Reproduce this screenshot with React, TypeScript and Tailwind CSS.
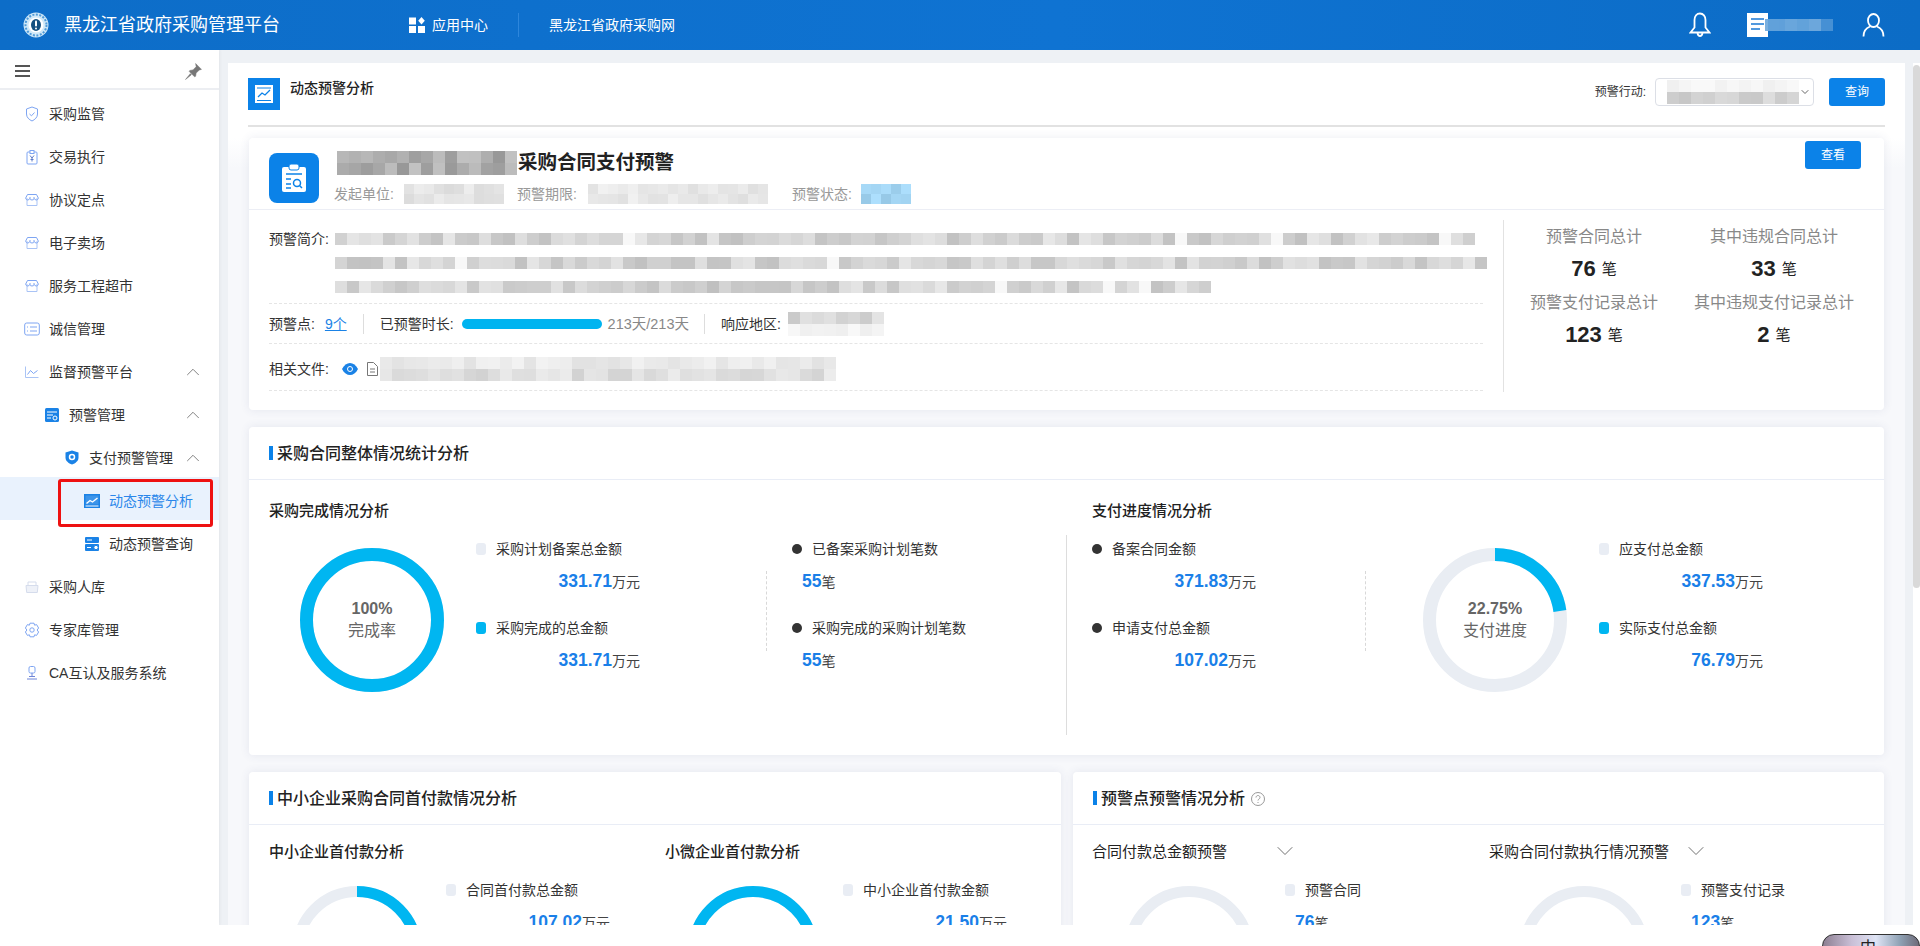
import React from "react";
import { ChevronUp, ChevronDown } from "lucide-react";

const rnd = (seed: number, i: number) => {
  const x = Math.sin(seed * 127.1 + i * 311.7) * 43758.5453;
  return x - Math.floor(x);
};

function Mosaic({ cols, rows = 1, size = 12, min, max, seed, gap = 0, tint }: { cols: number; rows?: number; size?: number; min: number; max: number; seed: number; gap?: number; tint?: boolean }) {
  const cells = [] as React.ReactNode[];
  for (let i = 0; i < cols * rows; i++) {
    const white = rnd(seed + 5, i) < gap;
    const v = white ? 248 : Math.round(min + (max - min) * rnd(seed, i));
    const bg = tint ? `rgb(${v - 70},${v - 20},${v + 10})` : `rgb(${v},${v},${v})`;
    cells.push(<div key={i} style={{ width: size, height: size, background: bg }} />);
  }
  return (
    <div className="shrink-0 grid" style={{ gridTemplateColumns: `repeat(${cols}, ${size}px)` }}>
      {cells}
    </div>
  );
}

const stroke = "#7ea5f2";

const Ic = ({ children, size = 16 }: { children: React.ReactNode; size?: number }) => (
  <svg width={size} height={size} viewBox="0 0 16 16" fill="none" stroke={stroke} strokeWidth="1" className="shrink-0">
    {children}
  </svg>
);

const IcShield = () => (
  <Ic>
    <path d="M8 1l5.500 2v5c0 3.400-2.600 5.600-5.500 7-2.900-1.400-5.500-3.600-5.500-7V3z" />
    <path d="M5.500 8l2 1.800 3-3.300" />
  </Ic>
);
const IcClip = () => (
  <Ic>
    <rect x="3" y="3" width="10" height="12" rx="1" />
    <rect x="6" y="1.500" width="4" height="3" fill="#fff" />
    <path d="M6 6.500l2 2.500 2-2.500M8 9v3.500M6.500 10.500h3" stroke="#5a79c8" />
  </Ic>
);
const IcStore = () => (
  <Ic>
    <path d="M3 6V13.500h10V6" stroke="#a9c3f5" />
    <path d="M3.500 2.500h9l1.800 3.500c0 1.200-1 2-2 2s-1.500-.6-1.800-1.200C10 7.400 9 8 8 8s-2-.6-2.500-1.200C5.200 7.400 4.700 8 3.700 8s-2-.8-2-2z" />
    <path d="M6 5v2M10 5v2" />
  </Ic>
);
const IcCredit = () => (
  <Ic>
    <rect x="0.700" y="2" width="14.600" height="12" rx="2" />
    <path d="M6 6h7M6 10h7M3 6h1M3 10h1" />
  </Ic>
);
const IcChart = () => (
  <Ic>
    <path d="M1.500 2.500v11h13" stroke="#aac4f5" />
    <path d="M3.500 10.500l3-4 3 3 4-3" />
  </Ic>
);
const IcInbox = () => (
  <Ic>
    <path d="M2 6.500h12l-.7 7H2.700z" stroke="#d5dcec" fill="#eef1f8" />
    <path d="M4 6V3h8v3" stroke="#d5dcec" />
  </Ic>
);
const IcGear = () => (
  <Ic>
    <path d="M6 1.200h4l.6 2 2-.6 2 3.400-1.500 2 1.500 2-2 3.400-2-.6-.6 2H6l-.6-2-2 .6-2-3.400 1.500-2-1.500-2 2-3.400 2 .6z" />
    <circle cx="8" cy="8" r="2.200" />
  </Ic>
);
const IcCa = () => (
  <Ic>
    <rect x="5" y="1.500" width="6" height="6.500" rx="1.500" />
    <path d="M8 8v3M3 14h10M5 11.500h6" stroke="#6f86d8" />
  </Ic>
);
const IcManage = () => (
  <svg width="14" height="14" viewBox="0 0 14 14" className="shrink-0">
    <rect width="14" height="14" rx="1.500" fill="#1a82e6" />
    <path d="M2 4h10M2 7h6M2 10h4" stroke="#fff" strokeWidth="1" />
    <circle cx="10" cy="10" r="2" fill="#1a82e6" stroke="#fff" />
  </svg>
);
const IcPayShield = () => (
  <svg width="14" height="15" viewBox="0 0 14 15" className="shrink-0">
    <path d="M7 .5l6.500 2v5c0 3.500-3 5.800-6.500 7-3.500-1.200-6.500-3.500-6.500-7v-5z" fill="#1a82e6" />
    <circle cx="7" cy="7" r="2.500" fill="none" stroke="#fff" strokeWidth="1.500" />
  </svg>
);
const IcTrend = ({ color = "#1a82e6" }: { color?: string }) => (
  <svg width="16" height="14" viewBox="0 0 16 14" className="shrink-0">
    <rect width="16" height="14" fill={color} />
    <rect x="1.500" y="1.500" width="13" height="9" fill="#fff" opacity="0.15" />
    <path d="M2.500 9.500l3.500-3 2.500 1.500 5-4" stroke="#fff" strokeWidth="1.400" fill="none" />
    <path d="M1.500 12h13" stroke="#fff" />
  </svg>
);
const IcQuery = () => (
  <svg width="16" height="14" viewBox="0 0 16 14" className="shrink-0">
    <rect x="1" y="0" width="14" height="6" rx="1" fill="#1a82e6" />
    <rect x="1" y="7" width="14" height="7" rx="1" fill="#1a82e6" />
    <circle cx="12" cy="10.500" r="2.200" fill="#fff" stroke="#1a82e6" />
    <path d="M3 3h5M3 10.500h4" stroke="#fff" />
  </svg>
);

const MenuRow = ({ pad, icon, label, arrow, gap, active }: { pad: string; icon: React.ReactNode; label: string; arrow?: boolean; gap: string; active?: boolean }) => (
  <div className={`h-[43px] pt-1 flex items-center text-sm ${pad} ${active ? "bg-[#e9f2fd] text-[#2b87ea]" : "text-[#333333]"}`}>
    {icon}
    <span className={gap}>{label}</span>
    {arrow && <ChevronUp size={22} strokeWidth={1} className="ml-auto mr-[15px] text-[#777777]" />}
  </div>
);

function Sidebar() {
  return (
    <aside className="relative w-[219px] shrink-0 bg-white shadow-[1px_0_3px_rgba(0,0,0,0.05)]">
      <div className="h-10 pt-1 border-b-2 border-[#eceef2] flex items-center justify-between pl-[15px] pr-[17px]">
        <svg width="15" height="12" viewBox="0 0 15 12">
          <path d="M0 1h15M0 6h15M0 11h15" stroke="#555555" strokeWidth="1.800" />
        </svg>
        <svg width="17" height="17" viewBox="0 0 16 16">
          <path d="M10 .5l5.500 5.500-2 .5-3 3-.5 3-1 .5-5-5 .5-1 3-.5 3-3zM5 10l-4.500 5.500L6 11z" fill="#777777" stroke="#777777" strokeWidth="0.500" />
        </svg>
      </div>
      <MenuRow pad="pl-6" gap="ml-[9px]" icon={<IcShield />} label="采购监管" />
      <MenuRow pad="pl-6" gap="ml-[9px]" icon={<IcClip />} label="交易执行" />
      <MenuRow pad="pl-6" gap="ml-[9px]" icon={<IcStore />} label="协议定点" />
      <MenuRow pad="pl-6" gap="ml-[9px]" icon={<IcStore />} label="电子卖场" />
      <MenuRow pad="pl-6" gap="ml-[9px]" icon={<IcStore />} label="服务工程超市" />
      <MenuRow pad="pl-6" gap="ml-[9px]" icon={<IcCredit />} label="诚信管理" />
      <MenuRow pad="pl-6" gap="ml-[9px]" icon={<IcChart />} label="监督预警平台" arrow />
      <MenuRow pad="pl-[45px]" gap="ml-[10px]" icon={<IcManage />} label="预警管理" arrow />
      <MenuRow pad="pl-[65px]" gap="ml-[10px]" icon={<IcPayShield />} label="支付预警管理" arrow />
      <MenuRow pad="pl-[84px]" gap="ml-[9px]" icon={<IcTrend />} label="动态预警分析" active />
      <MenuRow pad="pl-[84px]" gap="ml-[9px]" icon={<IcQuery />} label="动态预警查询" />
      <MenuRow pad="pl-6" gap="ml-[9px]" icon={<IcInbox />} label="采购人库" />
      <MenuRow pad="pl-6" gap="ml-[9px]" icon={<IcGear />} label="专家库管理" />
      <MenuRow pad="pl-6" gap="ml-[9px]" icon={<IcCa />} label="CA互认及服务系统" />
      <div className="absolute left-[58px] top-[429px] w-[155px] h-12 border-[3px] border-[#ee1111] rounded-[3px]" />
    </aside>
  );
}

function Header() {
  return (
    <header className="h-[50px] shrink-0 flex items-center text-white bg-[linear-gradient(90deg,#0d6dc8,#0f73d2_55%,#0c6cc6)]">
      <svg width="26" height="26" viewBox="0 0 26 26" className="ml-[23px] shrink-0">
        <circle cx="13" cy="13" r="12.500" fill="#cfe8f8" />
        <circle cx="13" cy="13" r="10.500" fill="none" stroke="#4f9ad8" strokeWidth="2" strokeDasharray="2 1.500" />
        <circle cx="13" cy="13" r="7.500" fill="#fff" />
        <ellipse cx="13" cy="13" rx="5" ry="6" fill="#14507f" />
        <rect x="12" y="8.500" width="2" height="6" rx="1" fill="#fff" />
        <circle cx="13" cy="16.500" r="1" fill="#fff" />
      </svg>
      <span className="ml-[15px] text-lg leading-none">黑龙江省政府采购管理平台</span>
      <svg width="16" height="16" viewBox="0 0 16 16" className="ml-[129px] shrink-0">
        <rect x="0" y="0.500" width="7" height="7" fill="#fff" />
        <rect x="0" y="9" width="7" height="7" fill="#fff" />
        <rect x="9" y="9" width="7" height="7" fill="#fff" />
        <path d="M12.500 0l3.300 3.800-3.300 3.800-3.300-3.800z" fill="#fff" />
      </svg>
      <span className="ml-[7px] text-sm">应用中心</span>
      <div className="ml-[30px] w-px h-6 bg-[#2d86dc]" />
      <span className="ml-[30px] text-sm">黑龙江省政府采购网</span>
      <svg width="22" height="26" viewBox="0 0 22 26" fill="none" stroke="#fff" strokeWidth="1.800" className="ml-auto shrink-0">
        <path d="M11 1.500c-3.300 0-5.500 2.800-5.500 6.500v7.500L1.500 20.500h19l-4-5V8c0-3.700-2.200-6.500-5.500-6.500z" />
        <path d="M8.500 21c.3 1.800 1.200 3 2.500 3s2.200-1.200 2.500-3" />
      </svg>
      <svg width="21" height="24" viewBox="0 0 21 24" className="ml-9 shrink-0">
        <path d="M0 0h21v24H0z" fill="#fff" />
        <path d="M4 6h13M4 11h13M4 16h9" stroke="#1a78d4" strokeWidth="1.500" />
      </svg>
      <div className="-ml-[3px] flex shrink-0 opacity-90">
        <div className="w-[20px] h-[12px] bg-[#6aa6dc]" />
        <div className="w-[12px] h-[12px] bg-[#74addf]" />
        <div className="w-[12px] h-[12px] bg-[#6ca8dd]" />
        <div className="w-[12px] h-[12px] bg-[#77aedf]" />
        <div className="w-[12px] h-[12px] bg-[#4d94d6]" />
      </div>
      <svg width="23" height="24" viewBox="0 0 23 24" fill="none" stroke="#fff" strokeWidth="1.800" className="ml-[29px] mr-[35px] shrink-0">
        <ellipse cx="11.500" cy="7.500" rx="5.500" ry="6.500" />
        <path d="M8 13.500C4 15 1.500 19 1.500 23.500M15 13.500c4 1.500 6.500 5.500 6.500 10" />
      </svg>
    </header>
  );
}

const Btn = ({ children, cls }: { children: string; cls: string }) => (
  <div className={`flex items-center justify-center bg-[#0b82e8] rounded-[3px] text-white text-xs ${cls}`}>{children}</div>
);

function Stat({ label, value }: { label: string; value: string }) {
  return (
    <div className="flex flex-col items-center">
      <div className="h-8 flex items-center text-base text-[#888888]">{label}</div>
      <div className="h-[30px] flex items-center text-[#222222]">
        <span className="text-[22px] font-bold">{value}</span>
        <span className="ml-[6px] mt-[3px] text-[15px]">笔</span>
      </div>
    </div>
  );
}

function SummaryCard() {
  return (
    <section className="mx-px mt-[11px] h-[272px] bg-white rounded-[4px] shadow-[0_0_10px_rgba(60,70,130,0.1)]">
      <div className="h-[72px] border-b border-[#eceef5] flex">
        <div className="ml-5 mt-[15px] w-[50px] h-[50px] rounded-lg bg-[#0b82e8] flex items-center justify-center shrink-0">
          <svg width="26" height="30" viewBox="0 0 26 30">
            <rect x="1" y="4" width="24" height="25" rx="2" fill="#fff" />
            <rect x="8" y="1" width="10" height="6" rx="2" fill="#fff" stroke="#0b82e8" />
            <path d="M5 11h16M5 16h5M5 21h5M5 25h5" stroke="#0b82e8" strokeWidth="1.500" />
            <circle cx="16" cy="20" r="3.500" fill="none" stroke="#0b82e8" strokeWidth="1.500" />
            <path d="M18.500 22.500l2.500 2.500" stroke="#0b82e8" strokeWidth="1.500" />
          </svg>
        </div>
        <div className="ml-[15px] flex flex-col">
          <div className="mt-[13px] flex items-center h-6">
            <div className="ml-[3px] mr-px"><Mosaic cols={15} rows={2} min={150} max={195} seed={3} /></div>
            <span className="text-[19.500px] font-bold text-[#222222] whitespace-nowrap">采购合同支付预警</span>
          </div>
          <div className="mt-[9px] flex items-center text-sm text-[#999999] h-5">
            <span className="w-[70px]">发起单位:</span>
            <Mosaic cols={10} rows={2} size={10} min={218} max={238} seed={7} />
            <span className="ml-[13px] w-[71px]">预警期限:</span>
            <Mosaic cols={18} rows={2} size={10} min={222} max={242} seed={9} />
            <span className="ml-[24px] w-[69px]">预警状态:</span>
            <Mosaic cols={5} rows={2} size={10} min={215} max={245} seed={11} tint />
          </div>
        </div>
        <Btn cls="ml-auto mt-[3px] mr-[23px] w-14 h-7">查看</Btn>
      </div>
      <div className="flex">
        <div className="ml-5 w-[1214px] shrink-0 text-sm text-[#333333]">
          <div className="h-[94px] pt-[23px] border-b border-dashed border-[#e5e5e5] flex">
            <span className="w-[66px] -mt-[4px] shrink-0">预警简介:</span>
            <div className="flex flex-col gap-3">
              <Mosaic cols={95} min={192} max={232} seed={13} gap={0.03} />
              <Mosaic cols={96} min={192} max={232} seed={17} gap={0.03} />
              <Mosaic cols={73} min={192} max={232} seed={19} gap={0.05} />
            </div>
          </div>
          <div className="h-10 pt-px border-b border-dashed border-[#e5e5e5] flex items-center">
            <span>预警点:</span>
            <span className="ml-[10px] text-[#1a82e6] underline">9个</span>
            <div className="ml-4 w-px h-5 bg-[#dddddd]" />
            <span className="ml-4">已预警时长:</span>
            <div className="ml-2 w-[140px] h-[10px] rounded-full bg-[#00b4f0]" />
            <span className="ml-[6px] text-[14.500px] text-[#888888]">213天/213天</span>
            <div className="ml-[15px] w-px h-5 bg-[#dddddd]" />
            <span className="ml-4">响应地区:</span>
            <div className="ml-[7px] flex flex-col">
              <Mosaic cols={8} min={200} max={228} seed={23} />
              <Mosaic cols={8} min={238} max={248} seed={24} />
            </div>
          </div>
          <div className="h-[47px] pt-[3px] border-b border-dashed border-[#e5e5e5] flex items-center">
            <span>相关文件:</span>
            <svg width="16" height="12" viewBox="0 0 16 12" className="ml-[13px] shrink-0">
              <path d="M0 6c2-4 5-6 8-6s6 2 8 6c-2 4-5 6-8 6s-6-2-8-6z" fill="#1a82e6" />
              <circle cx="8" cy="6" r="2.500" fill="none" stroke="#fff" />
            </svg>
            <svg width="11" height="14" viewBox="0 0 11 14" className="ml-[9px] shrink-0" fill="none" stroke="#777777">
              <path d="M.5.5h6l4 4v9H.5zM3 7h5M3 10h5" />
            </svg>
            <div className="ml-[2px] flex flex-col">
              <Mosaic cols={38} min={226} max={242} seed={29} />
              <Mosaic cols={38} min={210} max={236} seed={30} />
            </div>
          </div>
        </div>
        <div className="ml-5 mt-[10px] h-[172px] flex-1 border-l border-[#e2e2e2]">
          <div className="mt-px grid grid-cols-[180px_180px] gap-y-1">
            <Stat label="预警合同总计" value="76" />
            <Stat label="其中违规合同总计" value="33" />
            <Stat label="预警支付记录总计" value="123" />
            <Stat label="其中违规支付记录总计" value="2" />
          </div>
        </div>
      </div>
    </section>
  );
}

function Donut({ size, thick, pct, color = "#00b6f1", children }: { size: number; thick: number; pct: number; color?: string; children?: React.ReactNode }) {
  const r = (size - thick) / 2;
  const c = 2 * Math.PI * r;
  return (
    <div className="relative shrink-0" style={{ width: size, height: size }}>
      <svg width={size} height={size} className="-rotate-90">
        <circle cx={size / 2} cy={size / 2} r={r} fill="none" stroke="#e9edf3" strokeWidth={thick} />
        <circle cx={size / 2} cy={size / 2} r={r} fill="none" stroke={color} strokeWidth={thick} strokeDasharray={`${(c * pct) / 100} ${c}`} />
      </svg>
      {children && (
        <div className="absolute inset-0 flex flex-col items-center justify-center text-base text-[#666666] leading-[22px]">{children}</div>
      )}
    </div>
  );
}

type Kind = "grey" | "cyan" | "dot";
const Marker = ({ kind }: { kind: Kind }) =>
  kind === "dot" ? (
    <div className="w-[10px] h-[10px] rounded-full bg-[#333333] shrink-0" />
  ) : (
    <div className={`w-[10px] h-3 rounded-[3px] shrink-0 ${kind === "cyan" ? "bg-[#00b6f1]" : "bg-[#e9edf4]"}`} />
  );

function Legend({ kind, label, value, unit, right, width = "w-[164px]" }: { kind: Kind; label: string; value: string; unit: string; right?: boolean; width?: string }) {
  return (
    <div className={`${width} shrink-0`}>
      <div className="h-6 flex items-center text-sm text-[#333333] whitespace-nowrap">
        <Marker kind={kind} />
        <span className="ml-[10px]">{label}</span>
      </div>
      <div className={`mt-2 h-6 flex items-center ${right ? "justify-end" : "pl-[10px]"}`}>
        <span className="text-[17.500px] font-bold text-[#1a7fe8]">{value}</span>
        <span className="text-sm text-[#444444] mt-[2px]">{unit}</span>
      </div>
    </div>
  );
}

const CardTitle = ({ children }: { children: React.ReactNode }) => (
  <div className="h-[53px] pt-[2px] border-b border-[#e9edf6] flex items-center pl-5 text-base font-medium text-[#222222]">
    <div className="w-1 h-[14px] -mt-[3px] bg-[#0b82e8] mr-1" />
    {children}
  </div>
);

const LegendPair = ({ children }: { children: React.ReactNode }) => (
  <div className="mt-[2px] flex flex-col gap-[23px]">{children}</div>
);

const Dash = () => <div className="mt-9 h-20 w-px border-l border-dashed border-[#d8d8d8] shrink-0" />;

function OverallCard() {
  return (
    <section className="mx-px mt-[17px] h-[328px] bg-white rounded-[4px] shadow-[0_0_10px_rgba(60,70,130,0.1)]">
      <CardTitle>采购合同整体情况统计分析</CardTitle>
      <div className="flex">
        <div className="w-[817px] pl-5 shrink-0">
          <div className="mt-5 h-[22px] flex items-center text-[15px] font-medium text-[#222222]">采购完成情况分析</div>
          <div className="mt-[13px] h-[200px] flex">
            <div className="ml-[31px] mt-[13px]">
              <Donut size={144} thick={13} pct={100}>
                <span className="font-bold">100%</span>
                <span>完成率</span>
              </Donut>
            </div>
            <div className="ml-[32px] w-[290px] shrink-0">
              <LegendPair>
                <Legend kind="grey" label="采购计划备案总金额" value="331.71" unit="万元" right />
                <Legend kind="cyan" label="采购完成的总金额" value="331.71" unit="万元" right />
              </LegendPair>
            </div>
            <Dash />
            <div className="ml-[25px]">
              <LegendPair>
                <Legend kind="dot" label="已备案采购计划笔数" value="55" unit="笔" />
                <Legend kind="dot" label="采购完成的采购计划笔数" value="55" unit="笔" />
              </LegendPair>
            </div>
          </div>
        </div>
        <div className="flex-1">
          <div className="mt-5 ml-[26px] h-[22px] flex items-center text-[15px] font-medium text-[#222222]">支付进度情况分析</div>
          <div className="mt-[13px] h-[200px] flex border-l border-[#dddddd] pl-[25px]">
            <div className="w-[273px] shrink-0">
              <LegendPair>
                <Legend kind="dot" label="备案合同金额" value="371.83" unit="万元" right />
                <Legend kind="dot" label="申请支付总金额" value="107.02" unit="万元" right />
              </LegendPair>
            </div>
            <Dash />
            <div className="ml-[57px] mt-[13px]">
              <Donut size={144} thick={13} pct={22.75}>
                <span className="font-bold">22.75%</span>
                <span>支付进度</span>
              </Donut>
            </div>
            <div className="ml-[32px]">
              <LegendPair>
                <Legend kind="grey" label="应支付总金额" value="337.53" unit="万元" right />
                <Legend kind="cyan" label="实际支付总金额" value="76.79" unit="万元" right />
              </LegendPair>
            </div>
          </div>
        </div>
      </div>
    </section>
  );
}

function MiniCol({ width, title, chevron, donutMl, legendMl, pct, label, value, unit, right, chevronCls }: { width: string; title: string; chevron?: boolean; donutMl: string; legendMl: string; pct: number; label: string; value: string; unit: string; right?: boolean; chevronCls?: string }) {
  return (
    <div className={`${width} shrink-0`}>
      <div className={`mt-4 h-[22px] flex items-center text-[15px] text-[#222222] whitespace-nowrap ${chevron ? "" : "font-medium"}`}>
        {title}
        {chevron && <ChevronDown size={28} strokeWidth={0.8} className={`-mt-[3px] text-[#666666] ${chevronCls}`} />}
      </div>
      <div className="mt-[15px] flex">
        <div className={`mt-2 ${donutMl}`}>
          <Donut size={130} thick={11} pct={pct} />
        </div>
        <div className={legendMl}>
          <Legend kind="grey" label={label} value={value} unit={unit} right={right} />
        </div>
      </div>
    </div>
  );
}

function BottomCards() {
  return (
    <div className="mx-px mt-[17px] flex gap-3">
      <section className="w-[812px] h-[300px] shrink-0 bg-white rounded-[4px] shadow-[0_0_10px_rgba(60,70,130,0.1)]">
        <CardTitle>中小企业采购合同首付款情况分析</CardTitle>
        <div className="flex pl-5">
          <MiniCol width="w-[396px]" title="中小企业首付款分析" donutMl="ml-[23px]" legendMl="ml-6" pct={28.8} label="合同首付款总金额" value="107.02" unit="万元" right />
          <MiniCol width="w-[370px]" title="小微企业首付款分析" donutMl="ml-[23px]" legendMl="ml-[25px]" pct={100} label="中小企业首付款金额" value="21.50" unit="万元" right />
        </div>
      </section>
      <section className="flex-1 h-[300px] bg-white rounded-[4px] shadow-[0_0_10px_rgba(60,70,130,0.1)]">
        <CardTitle>
          预警点预警情况分析
          <svg width="16" height="16" viewBox="0 0 16 16" className="ml-[5px]" fill="none" stroke="#999999">
            <circle cx="8" cy="8" r="6.500" />
            <path d="M6 6.500c0-1.200 1-2 2-2s2 .8 2 2c0 1.500-2 1.500-2 3M8 11v1" />
          </svg>
        </CardTitle>
        <div className="flex pl-[19px]">
          <MiniCol width="w-[397px]" title="合同付款总金额预警" chevron chevronCls="ml-[44px]" donutMl="ml-8" legendMl="ml-[31px]" pct={0} label="预警合同" value="76" unit="笔" />
          <MiniCol width="w-[380px]" title="采购合同付款执行情况预警" chevron chevronCls="ml-[13px]" donutMl="ml-[30px]" legendMl="ml-8" pct={0} label="预警支付记录" value="123" unit="笔" />
        </div>
      </section>
    </div>
  );
}

export default function App() {
  return (
    <div className="h-screen w-full flex flex-col overflow-hidden bg-white font-['Liberation_Sans','Noto_Sans_CJK_SC',sans-serif]">
      <Header />
      <div className="flex-1 min-h-0 flex overflow-hidden">
        <Sidebar />
        <main className="flex-1 min-w-0 bg-[#eef1f5] pt-[13px] pl-[9px] overflow-hidden flex">
          <div className="w-[1677px] shrink-0 bg-white overflow-hidden">
            <div className="px-5">
              <div className="pt-[15px] h-[62px] flex">
                <div className="w-8 h-8 bg-[#0b82e8] flex items-center justify-center shrink-0">
                  <svg width="18" height="18" viewBox="0 0 18 18">
                    <rect width="18" height="18" fill="#fff" />
                    <path d="M2 3h14M2 15.500h14" stroke="#0b82e8" />
                    <path d="M3 12l4-4 3 2 5-5" stroke="#0b82e8" strokeWidth="1.300" fill="none" />
                  </svg>
                </div>
                <span className="ml-[10px] h-5 text-sm font-medium text-[#222222]">动态预警分析</span>
                <span className="ml-auto mt-[6px] h-5 text-xs text-[#333333]">预警行动:</span>
                <div className="ml-[9px] relative w-[159px] h-7 border border-[#dcdfe6] rounded-[4px] flex items-center pl-[11px] overflow-hidden">
                  <div className="flex flex-col">
                    <Mosaic cols={11} min={236} max={250} seed={31} />
                    <Mosaic cols={11} min={198} max={222} seed={32} />
                  </div>
                  <ChevronDown size={12} className="text-[#666666]" />
                </div>
                <Btn cls="ml-[15px] w-14 h-7">查询</Btn>
              </div>
              <div className="h-[2px] bg-[#e2e2e2]" />
            </div>
            <div className="px-5 h-[800px] bg-[linear-gradient(#ffffff,#f7f8fb_30px)]">
              <SummaryCard />
              <OverallCard />
              <BottomCards />
            </div>
          </div>
          <div className="ml-2 w-[7px] bg-white shrink-0">
            <div className="mt-[2px] h-[523px] rounded-full bg-[#d9d9d9]" />
          </div>
        </main>
      </div>
      <div className="h-[21px] shrink-0 bg-white flex justify-end overflow-hidden">
        <div className="mt-[9px] w-[98px] h-[32px] rounded-[12px] border border-[#333333] bg-[linear-gradient(90deg,#8d7f92,#c9bfd6_30%,#dfe4f5_55%,#8fa2b5_80%,#6d6a78)] flex justify-center pr-[6px] text-base text-[#222222] leading-[20px] pt-[3px] shrink-0">
          中
        </div>
      </div>
    </div>
  );
}
